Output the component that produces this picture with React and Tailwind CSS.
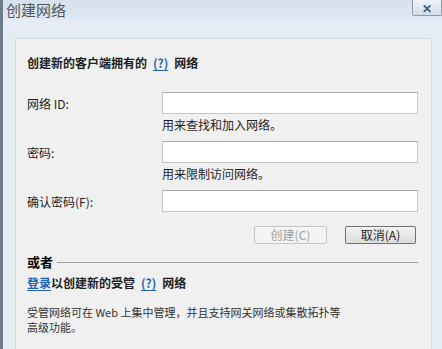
import React from "react";

const cjk = { fontFamily: '"Microsoft YaHei", "Noto Sans CJK SC", sans-serif' };
const song = { fontFamily: '"SimSun", "Noto Sans CJK SC", sans-serif' };

const Field = ({ label, hint }) => (
  <div className="flex items-start">
    <div className="w-[135px] pt-[3px] text-[12px] text-[#1e1e1e]">{label}</div>
    <div className="w-[256px]">
      <input
        type="text"
        className="block h-[22px] w-full border border-[#c6c6c6] border-t-[#a8a8a8] bg-white outline-none"
      />
      {hint && <div className="h-[21px] pt-[2px] text-[12px] leading-[17px] text-[#1e1e1e]">{hint}</div>}
    </div>
  </div>
);

const Help = () => (
  <span className="mx-[6px] text-[#1f64b4] underline underline-offset-2">(?)</span>
);

export default function App() {
  return (
    <div
      className="relative h-[349px] w-[442px] overflow-hidden border-l-[3px] border-[#6e7c8c] bg-[#e6ecf3]"
      style={cjk}
    >
      {/* title bar */}
      <div className="flex h-[19px] items-start bg-gradient-to-b from-[#d5e1ee] to-[#dfe8f2]">
        <div className="pl-[3px] text-[15px] leading-[19px] text-[#555]">创建网络</div>
        <div className="ml-auto flex h-[16px] w-[30px] items-center justify-center rounded-b-[2px] border border-t-0 border-[#8c9bb0] bg-gradient-to-b from-[#eef3f9] to-[#d3dde9] text-[12px] font-bold leading-none text-[#4c5666]">
          ✕
        </div>
      </div>

      {/* body */}
      <div className="pl-[12px] pr-[10px] pt-[19px]">
        <div className="h-[320px] border border-[#d6d9dd] bg-[#f0f0f0] pl-[11px] pr-[13px] pt-[15px]">
          <div className="text-[12px] font-bold text-[#1e1e1e]" style={song}>
            创建新的客户端拥有的
            <Help />
            网络
          </div>

          <div className="mt-[20px] flex flex-col gap-[6px]">
            <Field label="网络 ID:" hint="用来查找和加入网络。" />
            <Field label="密码:" hint="用来限制访问网络。" />
            <Field label="确认密码(F):" />
          </div>

          <div className="mt-[14px] flex justify-end gap-[18px] pr-[2px]">
            <div className="flex h-[18px] w-[73px] items-center justify-center rounded-[2px] border border-[#c4c4c4] bg-[#f4f4f4] text-[12px] text-[#a0a0a0]">
              创建(C)
            </div>
            <div className="flex h-[18px] w-[71px] items-center justify-center rounded-[2px] border border-[#707070] bg-gradient-to-b from-[#f2f2f2] to-[#dcdcdc] text-[12px] text-[#1e1e1e]">
              取消(A)
            </div>
          </div>

          <div className="mt-[10px] flex items-center">
            <div className="text-[13px] font-bold leading-[16px] text-black">或者</div>
            <div className="ml-[4px] h-px flex-1 bg-[#a0a0a0]" />
          </div>

          <div className="mt-[4px] text-[12px] font-bold leading-[18px] text-[#1e1e1e]" style={song}>
            <span className="text-[#1f64b4] underline underline-offset-2">登录</span>
            以创建新的受管
            <Help />
            网络
          </div>

          <div
            className="mt-[13px] text-[11px] leading-[15px] text-[#333]"
            style={{ fontFamily: '"SimSun", "Noto Sans CJK SC", monospace' }}
          >
            受管网络可在 Web 上集中管理，并且支持网关网络或集散拓扑等
            <br />
            高级功能。
          </div>
        </div>
      </div>
    </div>
  );
}
